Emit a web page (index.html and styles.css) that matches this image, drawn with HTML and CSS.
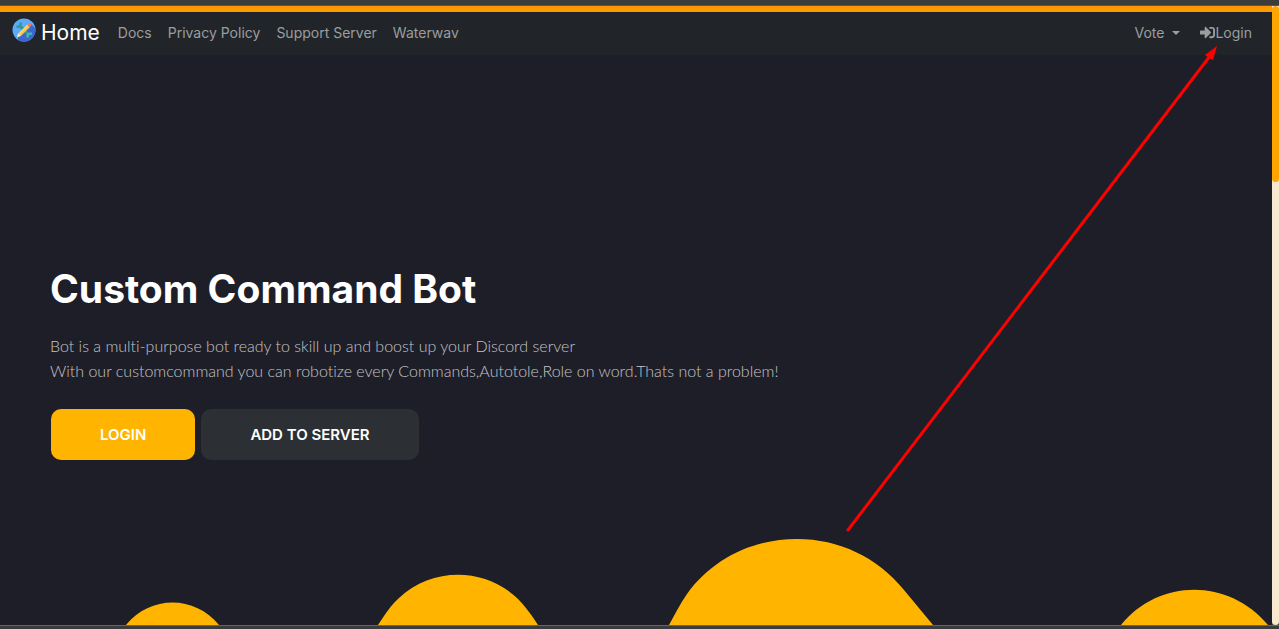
FILE: index.html
```html
<!DOCTYPE html>
<html lang="en">
<head>
<meta charset="utf-8">
<meta name="viewport" content="width=device-width, initial-scale=1">
<title>Custom Command Bot</title>
<link rel="stylesheet" href="styles.css">
</head>
<body>
<div class="frame">
  <div class="view">
    <div class="page">
      <nav class="navbar">
        <a class="brand" href="#home">
          <svg class="logo" viewBox="0 0 24 24" aria-hidden="true">
            <defs><clipPath id="disc"><circle cx="12" cy="12" r="11.5"/></clipPath></defs>
            <circle cx="12" cy="12" r="11.5" fill="#5cabf8"/>
            <path clip-path="url(#disc)" d="M18 5 L24 11 V24 H6 V19 Z" fill="#3b67ce"/>
            <path d="M8 8 L16.500 16.500" stroke="#2f9b93" stroke-width="3"/>
            <path d="M4.500 8.500 L8 9 L9 4.500" fill="none" stroke="#2f9b93" stroke-width="2.500"/>
            <path d="M15.500 19.500 L16 16 L20 15.500" fill="none" stroke="#49b1bd" stroke-width="2.500"/>
            <path d="M5 19 L6.200 15.500 L15.500 6.200 L18 8.700 L8.700 18 Z" fill="#ffd65a"/>
            <path d="M7.500 16.800 L16.700 7.500 L18 8.700 L8.700 18 Z" fill="#fbc24e"/>
            <path d="M15 6.700 L17 4.800 Q18 4.400 19 5.300 Q20 6.500 19.300 7.300 L17.500 9.200 Z" fill="#ef7b5b"/>
            <path d="M5 19 L6.200 15.500 L8.700 18 Z" fill="#ffedc0"/>
          </svg>
          <span>Home</span>
        </a>
        <a class="link" href="#docs">Docs</a>
        <a class="link" href="#privacy">Privacy Policy</a>
        <a class="link" href="#support">Support Server</a>
        <a class="link" href="#waterwav">Waterwav</a>
        <div class="account">
          <button class="link vote" type="button" aria-haspopup="true">Vote<span class="caret"></span></button>
          <a class="link login" href="#login">
            <svg class="login-icon" viewBox="0 0 512 512" aria-hidden="true"><path fill="currentColor" d="M416 448h-84c-7 0-12-5-12-12v-40c0-7 5-12 12-12h84c18 0 32-14 32-32V160c0-18-14-32-32-32h-84c-7 0-12-5-12-12V76c0-7 5-12 12-12h84c53 0 96 43 96 96v192c0 53-43 96-96 96zm-47-209L201 71c-15-15-41-5-41 17v96H24c-13 0-24 11-24 24v96c0 13 11 24 24 24h136v96c0 22 26 32 41 17l168-168c9-9 9-25 0-34z"/></svg>Login
          </a>
        </div>
      </nav>
      <main class="hero">
        <section class="intro">
          <h1>Custom Command Bot</h1>
          <p>Bot is a multi-purpose bot ready to skill up and boost up your Discord server<br>With our customcommand you can robotize every Commands,Autotole,Role on word.Thats not a problem!</p>
          <div class="actions">
            <a class="btn primary" href="#login">LOGIN</a>
            <a class="btn dark" href="#invite">ADD TO SERVER</a>
          </div>
        </section>
        <svg class="hills" viewBox="0 0 1272 90" preserveAspectRatio="none" aria-hidden="true">
          <path fill="#ffb400" d="M126 90 C150 60 195 60 219 90 Z M378 90 C386 78 391 70 399 63 C432 32 484 32 517 63 C525 71 531 79 538 90 Z M669 90 C675 79 680 69 687 59 C713 23 754 4 797 4 C839 4 877 22 904 55 L933 90 Z M1121 90 C1159 43 1229 43 1268 90 Z"/>
        </svg>
      </main>
    </div>
    <div class="scrollbar" aria-hidden="true"><div class="thumb"></div></div>
  </div>
  <svg class="pointer" viewBox="0 0 372 486" aria-hidden="true">
    <path d="M3 484 L365 10" fill="none" stroke="#f00" stroke-width="3" stroke-linecap="round"/>
    <path d="M372 0 L368 14 L364 12 L360 9 Z" fill="#f00"/>
  </svg>
</div>
</body>
</html>
```

FILE: styles.css
```css
* {
  box-sizing: border-box;
}

body {
  margin: 0;
  background: #3c3c3c;
  font-family: Inter, "Open Sans", sans-serif;
}

a {
  color: inherit;
  text-decoration: none;
}

.frame {
  position: relative;
  display: flex;
  min-height: 100vh;
  padding: 5px 0 3px;
}

.view {
  display: flex;
  flex: 1;
  border-top: 1px solid #555;
  border-bottom: 1px solid #656565;
}

.page {
  display: flex;
  flex: 1;
  flex-direction: column;
  border-top: 6px solid #ff9900;
  background: #1e1e28;
}

.navbar {
  display: flex;
  align-items: center;
  min-height: 43px;
  padding: 0 12px 2px;
  background: #212529;
  color: #9b9d9e;
  white-space: nowrap;
}

.brand {
  display: flex;
  align-items: center;
  gap: 5px;
  margin-right: 10px;
  color: #fff;
  font-size: 21px;
  line-height: 30px;
}

.logo {
  width: 24px;
  height: 24px;
  margin-bottom: 6px;
}

.link {
  padding: 0 8px;
  border: 0;
  background: none;
  color: inherit;
  font-family: inherit;
  font-size: 14px;
  line-height: 24px;
}

.account {
  display: flex;
  gap: 4px;
  margin-left: auto;
}

.vote,
.login {
  display: flex;
  align-items: center;
}

.vote {
  gap: 8px;
}

.caret {
  border-top: 4px solid;
  border-right: 4px solid transparent;
  border-left: 4px solid transparent;
}

.login-icon {
  width: 15px;
  height: 15px;
}

.hero {
  display: flex;
  flex: 1;
  flex-direction: column;
  justify-content: space-between;
}

.intro {
  padding: 208px 50px 0;
}

h1 {
  margin: 0;
  color: #fff;
  font-size: 39px;
  font-weight: 700;
  line-height: 52px;
}

p {
  margin: 18px 0 26px;
  color: #c4c4c6;
  font-family: Lato, sans-serif;
  font-size: 16px;
  font-weight: 300;
  font-variant-ligatures: none;
  line-height: 25px;
}

.actions {
  display: flex;
  gap: 6px;
  padding-left: 1px;
}

.btn {
  padding: 0 49px;
  border-radius: 10px;
  color: #fff;
  font-size: 15px;
  font-weight: 600;
  line-height: 51px;
}

.primary {
  background: #ffb400;
}

.dark {
  background: #2c2f33;
}

.hills {
  display: block;
  width: 100%;
  height: 90px;
}

.scrollbar {
  width: 7px;
  background: #f8e8cf;
  border-radius: 0 0 4px 4px;
}

.thumb {
  height: 176px;
  border-radius: 4px;
  background: #ffa500;
}

.pointer {
  position: absolute;
  top: 46px;
  right: 62px;
  width: 372px;
  height: 486px;
  pointer-events: none;
}
```
